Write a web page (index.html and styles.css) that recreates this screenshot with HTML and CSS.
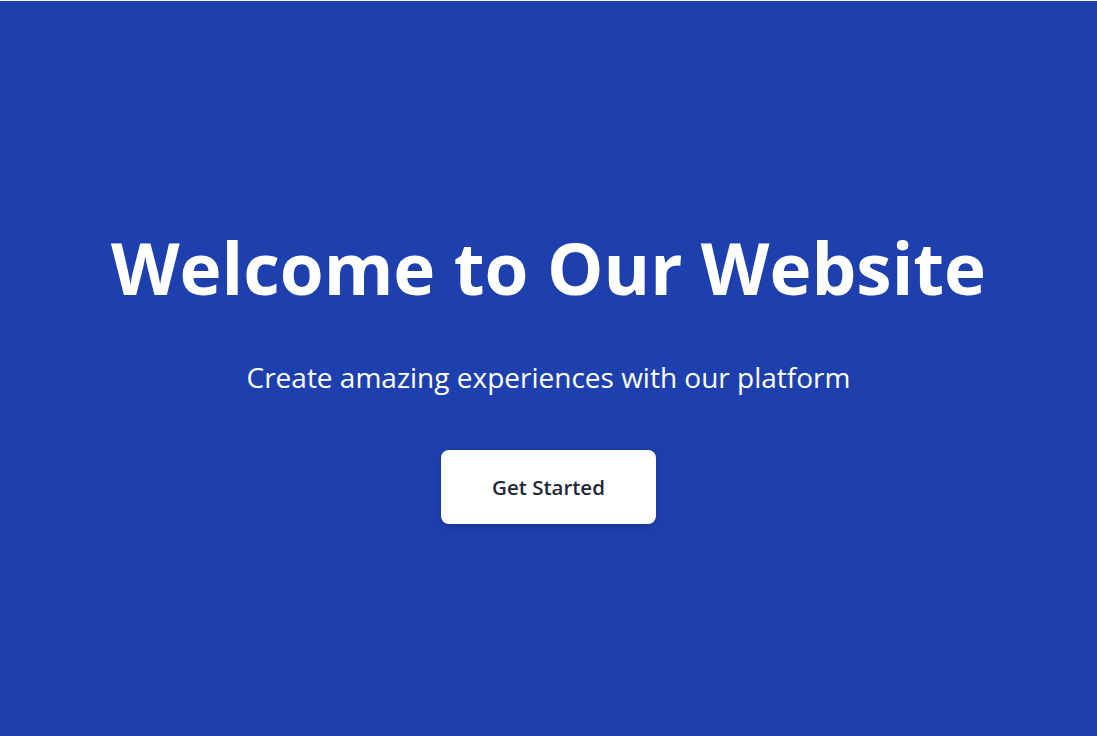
FILE: index.html
```html
<!DOCTYPE html>
<html lang="en">
<head>
<meta charset="utf-8">
<title>Welcome</title>
<link rel="stylesheet" href="styles.css">
</head>
<body>
<section class="hero">
  <div class="hero-content">
    <h1 class="hero-title">Welcome to Our Website</h1>
    <p class="hero-subtitle">Create amazing experiences with our platform</p>
    <button class="hero-button" type="button">Get Started</button>
  </div>
</section>
</body>
</html>
```

FILE: styles.css
```css
html, body {
  margin: 0;
  padding: 0;
}
body {
  background: #f3f4f6;
  padding-top: 1px;
  font-family: "Open Sans", "Noto Sans", sans-serif;
}
.hero {
  height: 735px;
  background: #1e40af;
  color: #ffffff;
  display: flex;
  align-items: center;
  justify-content: center;
  text-align: center;
}
.hero-content {
  display: flex;
  flex-direction: column;
  align-items: center;
  padding-top: 12px;
}
.hero-title {
  margin: 0;
  font-size: 71px;
  font-weight: 700;
  line-height: 1.2;
}
.hero-subtitle {
  margin: 45px 0 52px;
  font-size: 28px;
  line-height: 1.5;
  font-weight: 400;
}
.hero-button {
  width: 215px;
  height: 74px;
  border: none;
  border-radius: 8px;
  background: #ffffff;
  color: #1f2937;
  font-family: inherit;
  font-size: 20.5px;
  font-weight: 600;
  box-shadow: 0 4px 12px rgba(0, 0, 0, 0.15);
  cursor: pointer;
}
```
